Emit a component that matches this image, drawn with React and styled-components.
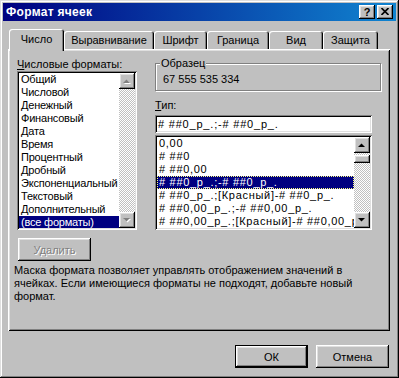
import React from 'react';
import styled, { createGlobalStyle } from 'styled-components';

const GlobalStyle = createGlobalStyle`
  html, body { margin: 0; padding: 0; background: #c0c0c0; }
  *, *::before, *::after { box-sizing: border-box; }
  body { font-family: "Liberation Sans", Arial, sans-serif; font-size: 11px; }
`;

const raisedShadow = 'inset -1px -1px #000, inset 1px 1px #fff, inset -2px -2px #808080, inset 2px 2px #dfdfdf';
const sunkenShadow = 'inset 1px 1px #808080, inset -1px -1px #fff, inset 2px 2px #000, inset -2px -2px #dfdfdf';

const Window = styled.div`
  width: 399px;
  height: 378px;
  padding: 3px;
  background: #c0c0c0;
  box-shadow: inset -1px -1px #000, inset 1px 1px #dfdfdf, inset -2px -2px #808080, inset 2px 2px #fff;
  display: flex;
  flex-direction: column;
  font-family: "Liberation Sans", Arial, sans-serif;
  font-size: 11px;
  color: #000;
`;

const TitleBar = styled.div`
  height: 18px;
  display: flex;
  align-items: center;
  padding: 0 3px 0 3px;
  background: linear-gradient(to right, #000080, #1084d0);
`;

const Title = styled.div`
  color: #fff;
  font-weight: bold;
  font-size: 12px;
  letter-spacing: 0.3px;
  flex: 1;
`;

const TitleButton = styled.div`
  width: 16px;
  height: 14px;
  background: #c0c0c0;
  box-shadow: ${raisedShadow};
  display: flex;
  align-items: center;
  justify-content: center;
  margin-left: ${p => p.$gap || 0}px;
  font-weight: bold;
  font-size: 11px;
  line-height: 14px;
  padding-bottom: 1px;
`;

const Content = styled.div`
  flex: 1;
  display: flex;
  flex-direction: column;
  padding: 8px 6px 0 5px;
`;

const TabRow = styled.div`
  display: flex;
  align-items: flex-end;
  padding-left: 1px;
  position: relative;
  z-index: 1;
`;

const Tab = styled.div`
  width: ${p => p.$w}px;
  height: ${p => (p.$active ? 22 : 18)}px;
  margin-bottom: ${p => (p.$active ? -2 : 0)}px;
  padding-top: ${p => (p.$active ? 4 : 3)}px;
  line-height: 13px;
  text-align: center;
  background: #c0c0c0;
  border-radius: 3px 3px 0 0;
  box-shadow: inset 1px 1px #fff, inset -1px 0 #000, inset -2px 0 #808080;
  white-space: nowrap;
`;

const Panel = styled.div`
  height: 282px;
  width: 382px;
  padding: 9px 0 0 9px;
  background: #c0c0c0;
  box-shadow: inset 1px 1px #fff, inset -1px -1px #000, inset 2px 2px #dfdfdf, inset -2px -2px #808080;
  display: grid;
  grid-template-columns: 120px 226px;
  grid-template-rows: auto 1fr;
  column-gap: 18px;
  align-content: start;
`;

const Column = styled.div`
  display: flex;
  flex-direction: column;
`;

const Label = styled.div`
  height: 13px;
  line-height: 13px;
  margin-top: ${p => p.$mt || 0}px;
  white-space: nowrap;
`;

const ListBox = styled.div`
  width: ${p => p.$w}px;
  height: ${p => p.$h}px;
  margin-top: ${p => p.$mt || 0}px;
  padding: 2px;
  background: #fff;
  box-shadow: ${sunkenShadow};
  display: flex;
`;

const Items = styled.div`
  flex: 1;
  overflow: hidden;
  letter-spacing: ${p => p.$spacing || 'normal'};
`;

const Item = styled.div`
  height: 13px;
  line-height: 13px;
  padding-left: 2px;
  white-space: nowrap;
  overflow: hidden;
  background: ${p => (p.$selected ? '#000080' : 'transparent')};
  color: ${p => (p.$selected ? '#fff' : '#000')};
  outline: ${p => (p.$focus ? '1px dotted #ffff80' : 'none')};
  outline-offset: -1px;
`;

const ScrollBar = styled.div`
  width: 16px;
  display: flex;
  flex-direction: column;
`;

const ScrollButton = styled.div`
  width: 16px;
  height: 16px;
  background: #c0c0c0;
  box-shadow: ${raisedShadow};
  display: flex;
  align-items: center;
  justify-content: center;
`;

const Track = styled.div`
  flex: ${p => (p.$h ? 'none' : 1)};
  height: ${p => (p.$h ? `${p.$h}px` : 'auto')};
  background-color: #fff;
  background-image: repeating-conic-gradient(#c0c0c0 0 25%, #fff 0 50%);
  background-size: 2px 2px;
`;

const Thumb = styled.div`
  width: 16px;
  height: 8px;
  background: #c0c0c0;
  box-shadow: ${raisedShadow};
`;

const Button = styled.div`
  width: 73px;
  height: 23px;
  margin-top: ${p => p.$mt || 0}px;
  margin-left: ${p => p.$ml || 0}px;
  display: flex;
  align-items: center;
  justify-content: center;
  background: #c0c0c0;
  box-shadow: ${p =>
    p.$default
      ? 'inset 0 0 0 1px #000, inset -2px -2px #000, inset 2px 2px #fff, inset -3px -3px #808080, inset 3px 3px #dfdfdf'
      : raisedShadow};
  color: ${p => (p.$disabled ? '#808080' : '#000')};
  text-shadow: ${p => (p.$disabled ? '1px 1px #fff' : 'none')};
`;

const GroupBox = styled.div`
  position: relative;
  margin-top: 5px;
  height: 28px;
  width: 226px;
  padding: 9px 0 0 7px;
  border: 1px solid #808080;
  box-shadow: inset 1px 1px #fff, 1px 1px #fff;
  line-height: 13px;
`;

const GroupLegend = styled.div`
  position: absolute;
  top: -7px;
  left: 4px;
  padding: 0 1px;
  line-height: 13px;
  background: #c0c0c0;
`;

const Input = styled.div`
  width: 217px;
  height: 18px;
  margin-top: 3px;
  padding: 3px 3px 0;
  line-height: 13px;
  letter-spacing: 0.8px;
  background: #fff;
  box-shadow: ${sunkenShadow};
  white-space: nowrap;
`;

const Description = styled.div`
  grid-column: 1 / -1;
  margin: 3px 0 0 -3px;
  line-height: 13px;
`;

const Footer = styled.div`
  display: flex;
  justify-content: flex-end;
  gap: 8px;
  margin-top: 14px;
  padding-right: 1px;
`;

const Arrow = ({ dir, disabled }) => {
  const pts = dir === 'up' ? '0,4 7,4 3.5,0.5' : '0,0 7,0 3.5,3.5';
  return (
    <svg width="8" height="5" viewBox="0 0 8 5" style={{ overflow: 'visible' }}>
      {disabled && <polygon points={pts} fill="#fff" transform="translate(1,1)" />}
      <polygon points={pts} fill={disabled ? '#808080' : '#000'} />
    </svg>
  );
};

const CloseGlyph = () => (
  <svg width="8" height="7" viewBox="0 0 8 7">
    <path d="M0.5 0 L7.5 7 M7.5 0 L0.5 7" stroke="#000" strokeWidth="1.6" />
  </svg>
);

const leftItems = [
  'Общий', 'Числовой', 'Денежный', 'Финансовый', 'Дата', 'Время', 'Процентный',
  'Дробный', 'Экспоненциальный', 'Текстовый', 'Дополнительный', '(все форматы)',
];

const rightItems = [
  '0,00',
  '# ##0',
  '# ##0,00',
  '# ##0_р_.;-# ##0_р_.',
  '# ##0_р_.;[Красный]-# ##0_р_.',
  '# ##0,00_р_.;-# ##0,00_р_.',
  '# ##0,00_р_.;[Красный]-# ##0,00_р_.',
];

const tabs = [
  ['Число', 55], ['Выравнивание', 90], ['Шрифт', 53], ['Граница', 62], ['Вид', 54], ['Защита', 55],
];

export default function App() {
  return (
    <>
      <GlobalStyle />
      <Window>
        <TitleBar>
          <Title>Формат ячеек</Title>
          <TitleButton>?</TitleButton>
          <TitleButton $gap={2}><CloseGlyph /></TitleButton>
        </TitleBar>
        <Content>
          <TabRow>
            {tabs.map(([t, w], i) => (
              <Tab key={t} $w={w} $active={i === 0}>{t}</Tab>
            ))}
          </TabRow>
          <Panel>
            <Column>
              <Label><u>Ч</u>исловые форматы:</Label>
              <ListBox $w={120} $h={159}>
                <Items $spacing="-0.2px">
                  {leftItems.map((t, i) => (
                    <Item key={t} $selected={i === leftItems.length - 1}>{t}</Item>
                  ))}
                </Items>
                <ScrollBar>
                  <ScrollButton><Arrow dir="up" disabled /></ScrollButton>
                  <Track />
                  <ScrollButton><Arrow dir="down" disabled /></ScrollButton>
                </ScrollBar>
              </ListBox>
              <Button $mt={8} $ml={1} $disabled>Удалить</Button>
            </Column>
            <Column>
              <GroupBox>
                <GroupLegend>Образец</GroupLegend>
                67 555 535 334
              </GroupBox>
              <Label $mt={8}><u>Т</u>ип:</Label>
              <Input># ##0_р_.;-# ##0_р_.</Input>
              <ListBox $w={217} $h={95} $mt={2}>
                <Items $spacing="0.7px">
                  {rightItems.map((t, i) => (
                    <Item key={t} $selected={i === 3} $focus={i === 3}>{t}</Item>
                  ))}
                </Items>
                <ScrollBar>
                  <ScrollButton><Arrow dir="up" /></ScrollButton>
                  <Track $h={2} />
                  <Thumb />
                  <Track />
                  <ScrollButton><Arrow dir="down" /></ScrollButton>
                </ScrollBar>
              </ListBox>
            </Column>
            <Description>
              Маска формата позволяет управлять отображением значений в<br />
              ячейках. Если имеющиеся форматы не подходят, добавьте новый<br />
              формат.
            </Description>
          </Panel>
          <Footer>
            <Button $default>ОК</Button>
            <Button>Отмена</Button>
          </Footer>
        </Content>
      </Window>
    </>
  );
}
